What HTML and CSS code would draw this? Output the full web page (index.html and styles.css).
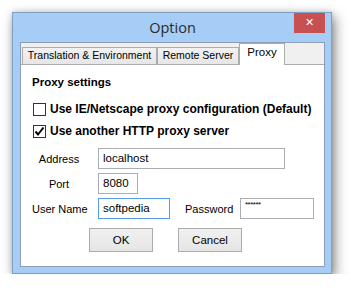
FILE: index.html
```html
<!DOCTYPE html>
<html lang="en">
<head>
  <meta charset="UTF-8" />
  <title>Option</title>
  <link rel="stylesheet" href="styles.css">
</head>
<body>

<div class="window">
  <div class="titlebar">
    <span></span>
    <span class="title">Option</span>
    <span class="close-wrap"><button class="close">&#x2715;</button></span>
  </div>

  <div class="client">
    <div class="tabs">
      <div class="tab tab-1">Translation &amp; Environment</div>
      <div class="tab tab-2">Remote Server</div>
      <div class="tab tab-3 active">Proxy</div>
    </div>

    <div class="page">
      <div class="heading">Proxy settings</div>

      <label class="check first">
        <span class="box"></span>
        <span>Use IE/Netscape proxy configuration (Default)</span>
      </label>
      <label class="check second">
        <span class="box">
          <svg width="11" height="11" viewBox="0 0 11 11"><path d="M1.5 5.5 L4 8.5 L9.5 1.5" fill="none" stroke="#000" stroke-width="2"/></svg>
        </span>
        <span>Use another HTTP proxy server</span>
      </label>

      <div class="row row-address">
        <span class="lbl">Address</span>
        <div class="field address">localhost</div>
      </div>
      <div class="row">
        <span class="lbl">Port</span>
        <div class="field port">8080</div>
      </div>
      <div class="row">
        <span class="lbl">User Name</span>
        <div class="field user focused">softpedia</div>
        <span class="lbl-pass">Password</span>
        <div class="field pass"><span class="stars">******</span></div>
      </div>

      <div class="buttons">
        <button class="btn">OK</button>
        <button class="btn">Cancel</button>
      </div>
    </div>
  </div>
</div>

</body>
</html>
```

FILE: styles.css
```css
* {
  box-sizing: border-box;
}

body {
  margin: 0;
  background: #fff;
  font-family: 'Liberation Sans', Arial, sans-serif;
  font-size: 11px;
  color: #000;
}

.window {
  margin: 12px 0 0 12px;
  width: 320px;
  height: 262px;
  background: #a6cdf5;
  border: 1px solid #7f9fc6;
  box-shadow: 3px 5px 12px rgba(0, 0, 0, 0.45), 0 0 6px rgba(0, 0, 0, 0.15);
  display: flex;
  flex-direction: column;
  padding: 0 6px 6px 7px;
}

.titlebar {
  height: 29px;
  display: grid;
  grid-template-columns: 1fr auto 1fr;
  flex-shrink: 0;
}

.title {
  font-family: 'Open Sans', 'Liberation Sans', sans-serif;
  font-size: 14.5px;
  color: #2a2a2a;
  padding-top: 5px;
}

.close-wrap {
  display: flex;
  justify-content: flex-end;
}

.close {
  width: 31px;
  height: 20px;
  border: none;
  background: #c75050;
  color: #fff;
  font-size: 11px;
  font-weight: bold;
  font-family: 'DejaVu Sans', sans-serif;
  padding: 0;
  line-height: 20px;
}

.client {
  flex: 1;
  border: 1px solid #8d9db3;
  background: #f0f0f0;
  display: flex;
  flex-direction: column;
}

.tabs {
  display: flex;
  align-items: flex-end;
  padding-left: 1px;
  height: 21px;
  flex-shrink: 0;
  position: relative;
  z-index: 1;
}

.tab {
  height: 17px;
  border: 1px solid #acacac;
  border-bottom: none;
  background: linear-gradient(#f2f2f2, #e6e6e6);
  text-align: center;
  line-height: 15px;
  font-size: 10.5px;
  white-space: nowrap;
  overflow: hidden;
}

.tab-1 { width: 135px; }
.tab-2 { width: 82px; }
.tab-3 { width: 46px; }

.tab.active {
  height: 22px;
  margin-bottom: -1px;
  background: #fff;
  line-height: 17px;
  font-size: 11.5px;
}

.page {
  flex: 1;
  background: #fff;
  border-top: 1px solid #acacac;
  padding: 11px 0 0 11px;
}

.heading {
  font-weight: bold;
  font-size: 11.5px;
  line-height: 13px;
}

.check {
  display: flex;
  align-items: center;
  gap: 4px;
  font-weight: bold;
  font-size: 12px;
  line-height: 13px;
  padding-left: 1px;
}

.check.first { margin-top: 14px; }
.check.second { margin-top: 9px; }

.box {
  width: 13px;
  height: 13px;
  border: 1px solid #333;
  background: #fff;
  display: flex;
  align-items: center;
  justify-content: center;
}

.row {
  display: flex;
  align-items: center;
  margin-top: 4px;
  height: 21px;
}

.row-address { margin-top: 10px; }

.lbl {
  width: 54px;
  text-align: center;
  font-size: 11px;
  white-space: nowrap;
  margin-right: 12px;
}

.field {
  height: 21px;
  border: 1px solid #abadb3;
  padding: 2px 0 0 4px;
  font-size: 11.5px;
  line-height: 14px;
}

.address { width: 187px; }
.port { width: 40px; }
.user { width: 72px; }
.pass { width: 74px; }

.focused {
  border-color: #569de5;
}

.lbl-pass {
  width: 45px;
  font-size: 11px;
  white-space: nowrap;
  margin: 0 10px 0 15px;
}

.stars {
  font-size: 8px;
  line-height: 8px;
  vertical-align: top;
  letter-spacing: -0.5px;
}

.buttons {
  display: flex;
  gap: 25px;
  margin: 9px 0 0 57px;
}

.btn {
  width: 64px;
  height: 24px;
  border: 1px solid #acacac;
  background: linear-gradient(#f0f0f0, #e5e5e5);
  font-family: 'Liberation Sans', Arial, sans-serif;
  font-size: 11.5px;
  color: #000;
  padding: 0;
}
```
